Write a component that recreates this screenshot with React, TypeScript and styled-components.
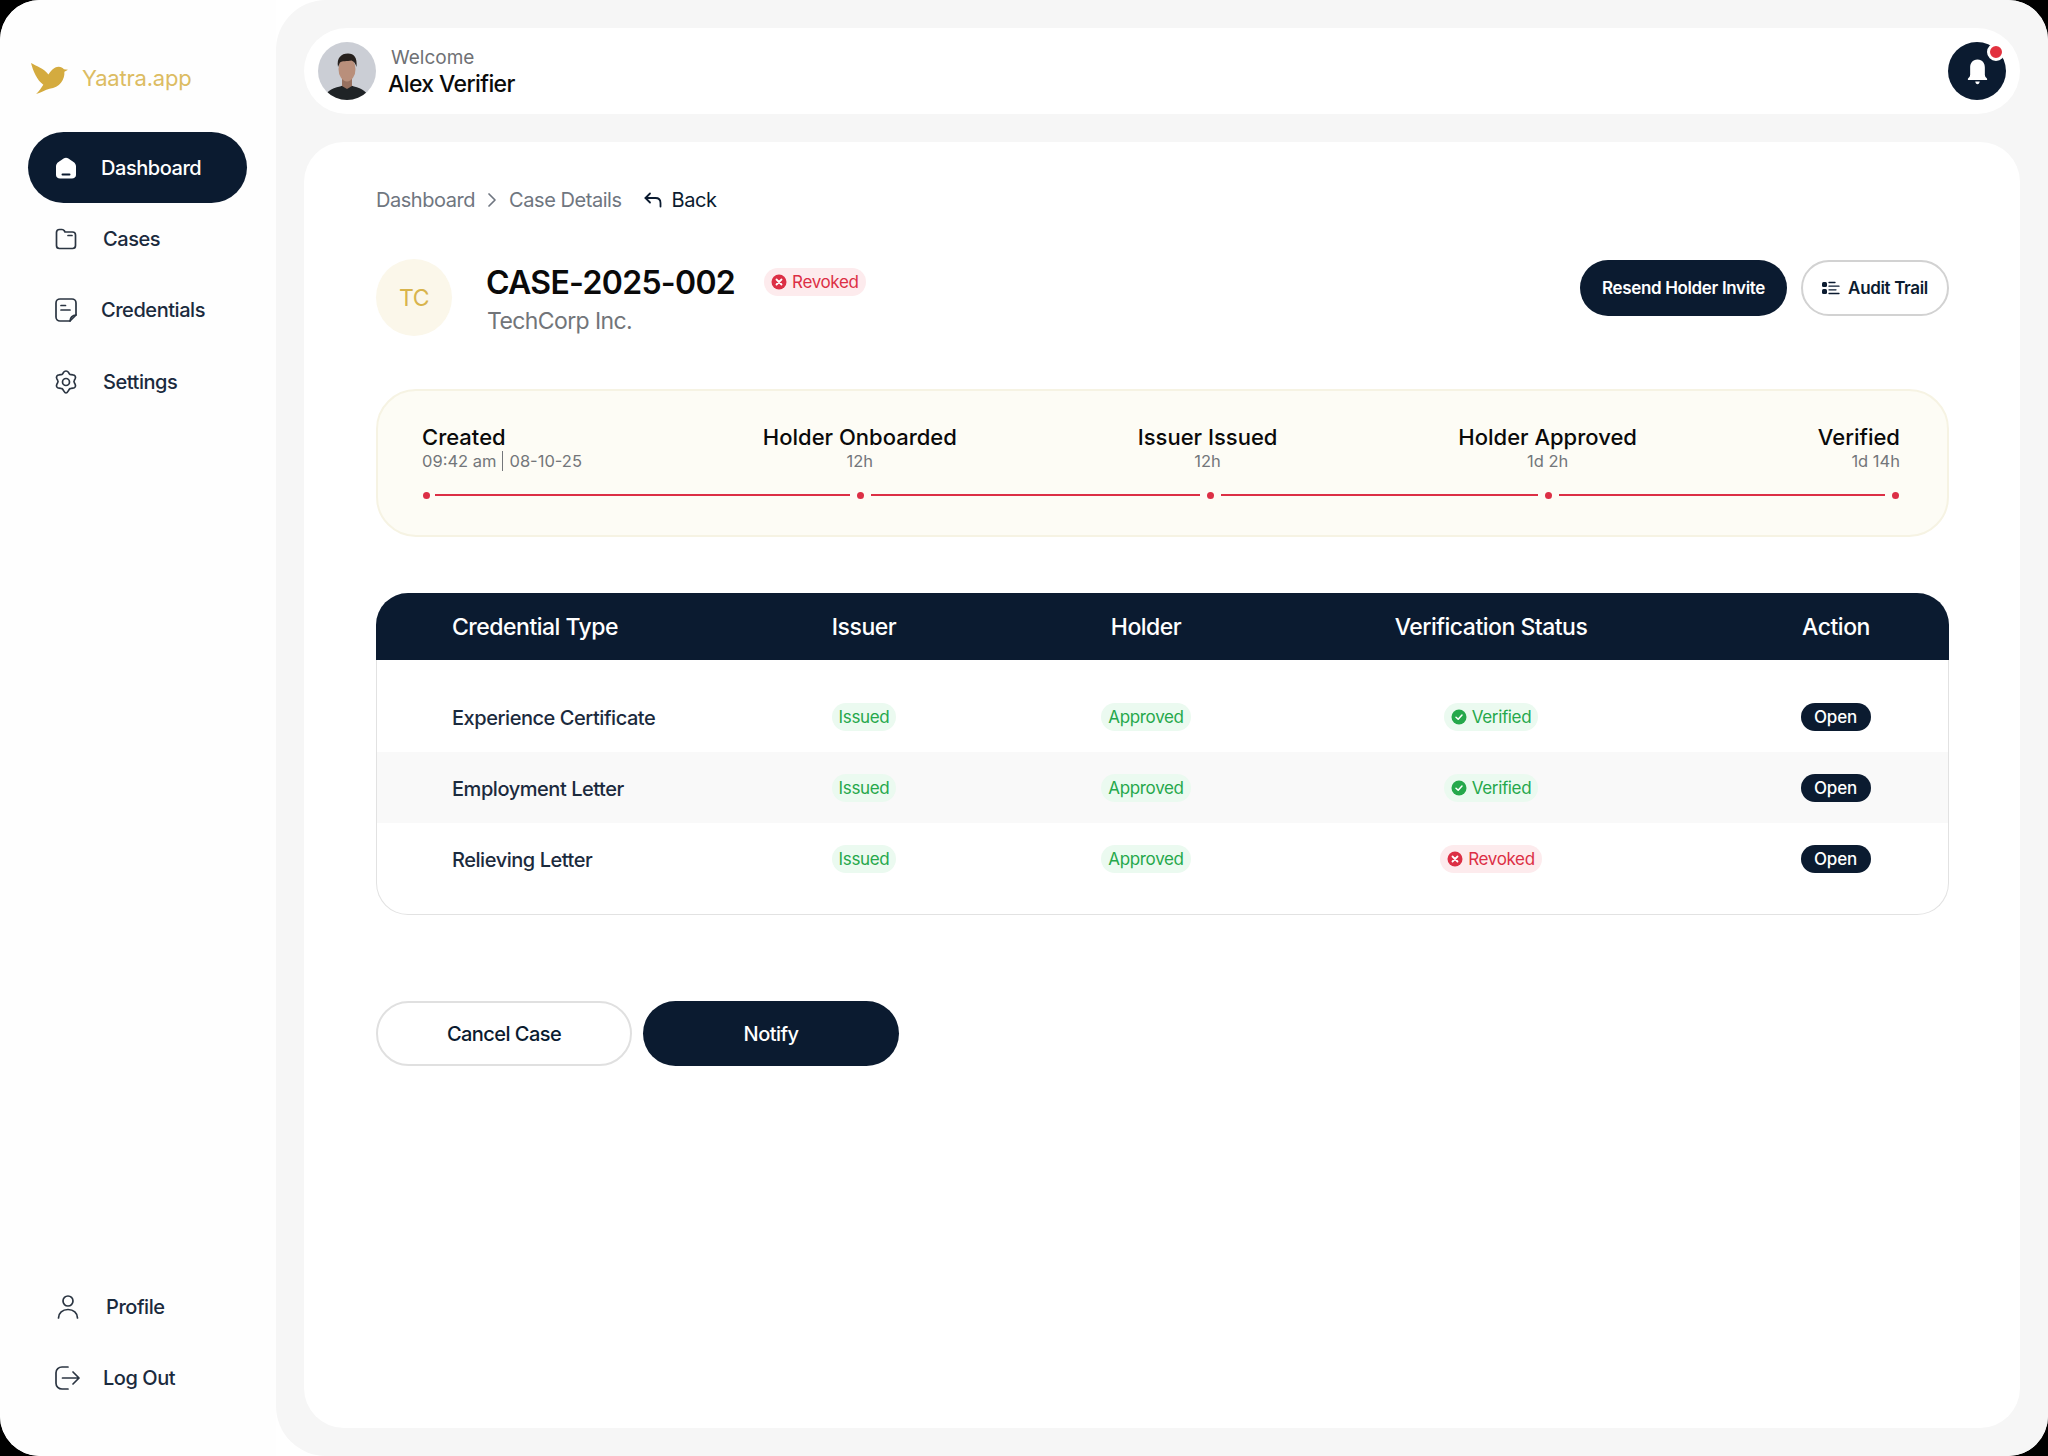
import React from 'react';
import styled, { createGlobalStyle } from 'styled-components';

const NAVY = '#0b1b30';
const RED = '#dc2f45';
const GREEN = '#25a84b';

const GlobalStyle = createGlobalStyle`
	html, body {
		margin: 0;
		padding: 0;
		background: #000000;
	}
	* {
		box-sizing: border-box;
	}
	body {
		font-family: Inter, "Liberation Sans", sans-serif;
		letter-spacing: -0.45px;
		color: ${NAVY};
	}
`;

const Frame = styled.div`
	width: 2048px;
	height: 1456px;
	display: flex;
	background: #ffffff;
	border-radius: 40px;
	overflow: hidden;
`;

const Sidebar = styled.aside`
	width: 276px;
	flex-shrink: 0;
	display: flex;
	flex-direction: column;
	padding: 61px 0 42px 28px;
	background: #fefefe;
`;

const Logo = styled.div`
	height: 34px;
	display: flex;
	align-items: center;
	gap: 14px;
	padding-left: 3px;
	font-size: 22px;
	letter-spacing: -0.2px;
	color: #dcbc62;
`;

const Nav = styled.nav`
	margin-top: 37px;
	display: flex;
	flex-direction: column;
`;

const BottomNav = styled(Nav)`
	margin-top: auto;
`;

const NavItem = styled.div<{ $active?: boolean; $gap: number; $inset?: number }>`
	width: 219px;
	height: 71.3px;
	display: flex;
	align-items: center;
	gap: ${(p) => p.$gap}px;
	padding-left: ${(p) => p.$inset ?? 27}px;
	border-radius: 36px;
	font-size: 20px;
	font-weight: 500;
	color: ${(p) => (p.$active ? '#ffffff' : '#1b2a3d')};
	background: ${(p) => (p.$active ? NAVY : 'transparent')};
`;

const Main = styled.main`
	flex: 1;
	display: flex;
	flex-direction: column;
	gap: 28px;
	padding: 28px;
	background: #f6f6f6;
	border-radius: 50px 0 0 50px;
`;

const TopBar = styled.header`
	height: 86px;
	flex-shrink: 0;
	display: flex;
	align-items: center;
	gap: 12px;
	padding: 0 14px;
	background: #ffffff;
	border-radius: 43px;
`;

const Avatar = styled.div`
	width: 58px;
	height: 58px;
	border-radius: 50%;
	overflow: hidden;
	flex-shrink: 0;

	svg {
		display: block;
		filter: blur(0.5px);
	}
`;

const Greeting = styled.div`
	flex: 1;
	display: flex;
	flex-direction: column;
`;

const Welcome = styled.span`
	margin-left: 3px;
	font-size: 19px;
	line-height: 25px;
	letter-spacing: normal;
	color: #6f7175;
`;

const UserName = styled.span`
	font-size: 23px;
	font-weight: 500;
	line-height: 28px;
	letter-spacing: -0.6px;
	color: #0a0a0a;
`;

const BellButton = styled.div`
	position: relative;
	width: 58px;
	height: 58px;
	display: flex;
	align-items: center;
	justify-content: center;
	padding-top: 2px;
	border-radius: 50%;
	background: ${NAVY};
`;

const BellDot = styled.span`
	position: absolute;
	top: 1px;
	right: 1px;
	width: 18px;
	height: 18px;
	border-radius: 50%;
	background: #e2323f;
	border: 3px solid #ffffff;
`;

const Card = styled.section`
	flex: 1;
	padding: 46px 71px 0 72px;
	background: #ffffff;
	border-radius: 40px;
`;

const Breadcrumb = styled.div`
	height: 24px;
	display: flex;
	align-items: center;
	font-size: 20px;
	color: #6f7680;
`;

const Crumb = styled.span`
	display: flex;
	margin-left: 11px;
`;

const BackLink = styled.span`
	display: flex;
	align-items: center;
	gap: 10px;
	margin-left: 22px;
	color: ${NAVY};
`;

const CaseHeader = styled.div`
	margin-top: 47px;
	height: 77px;
	display: flex;
	align-items: flex-start;
`;

const Initials = styled.div`
	width: 76px;
	height: 77px;
	display: flex;
	align-items: center;
	justify-content: center;
	border-radius: 50%;
	background: #fbf7ea;
	font-size: 23px;
	color: #d8b44c;
`;

const CaseInfo = styled.div`
	margin-left: 34px;
	flex: 1;
`;

const TitleRow = styled.div`
	height: 46px;
	display: flex;
	align-items: center;
	gap: 29px;
`;

const CaseTitle = styled.h1`
	margin: 0;
	font-size: 32px;
	font-weight: 600;
	letter-spacing: -0.7px;
	color: #0a0a0a;
`;

const CaseCompany = styled.div`
	margin: 2px 0 0 1px;
	font-size: 23px;
	line-height: 28px;
	letter-spacing: -0.6px;
	color: #727579;
`;

const Actions = styled.div`
	margin-top: 1px;
	display: flex;
	gap: 14px;
`;

const HeaderButton = styled.div<{ $outline?: boolean; $w: number }>`
	width: ${(p) => p.$w}px;
	height: 56px;
	display: flex;
	align-items: center;
	justify-content: center;
	gap: 8px;
	border-radius: 28px;
	font-size: 17px;
	font-weight: 600;
	letter-spacing: -0.35px;
	color: ${(p) => (p.$outline ? NAVY : '#ffffff')};
	background: ${(p) => (p.$outline ? '#ffffff' : NAVY)};
	border: ${(p) => (p.$outline ? '2px solid #d2d2d2' : 'none')};
`;

const Timeline = styled.div`
	margin-top: 53px;
	height: 148px;
	padding: 33px 47px 0 44px;
	background: #fdfcf5;
	border: 2px solid #f6f3e3;
	border-radius: 40px;
`;

const Steps = styled.div`
	display: flex;
	justify-content: space-between;
`;

const Step = styled.div<{ $align: string }>`
	display: flex;
	flex-direction: column;
	text-align: ${(p) => p.$align};
	letter-spacing: normal;
`;

const StepName = styled.span`
	font-size: 22px;
	font-weight: 500;
	line-height: 26px;
	color: #0a0a0a;
`;

const StepTime = styled.span`
	font-size: 16.5px;
	line-height: 22px;
	color: #73767a;
`;

const TimeDivider = styled.span`
	margin: 0 6px;
	border-left: 1.5px solid #73767a;
`;

const Track = styled.div`
	margin-top: 20px;
	padding: 0 1px;
	height: 6px;
	display: flex;
	align-items: center;
	gap: 7px;
`;

const TrackDot = styled.span`
	width: 7px;
	height: 7px;
	flex-shrink: 0;
	border-radius: 50%;
	background: ${RED};
`;

const TrackLine = styled.span<{ $w: number }>`
	flex: ${(p) => p.$w} 1 0;
	height: 1.5px;
	background: ${RED};

	&:nth-child(2) {
		margin-left: -2px;
	}
`;

const Table = styled.div`
	margin-top: 56px;
	height: 322px;
	display: flex;
	flex-direction: column;
`;

const TableHead = styled.div`
	height: 67px;
	flex-shrink: 0;
	display: grid;
	grid-template-columns: 319px 338px 226px 464px 1fr;
	align-items: center;
	background: ${NAVY};
	border-radius: 32px 32px 0 0;
	font-size: 23px;
	font-weight: 500;
	letter-spacing: -0.5px;
	color: #ffffff;
`;

const TableBody = styled.div`
	flex: 1;
	padding-top: 21px;
	border: 1.5px solid #e2e2e2;
	border-top: none;
	border-radius: 0 0 32px 32px;
`;

const Row = styled.div<{ $shaded?: boolean }>`
	height: 71px;
	display: grid;
	grid-template-columns: 318px 338px 226px 464px 1fr;
	align-items: center;
	background: ${(p) => (p.$shaded ? '#f9f9f9' : 'transparent')};
`;

const HeadFirst = styled.span`
	padding-left: 76px;
`;

const TypeCell = styled.span`
	padding: 2px 0 0 75px;
	font-size: 20px;
	font-weight: 500;
	color: #1b2a3d;
`;

const Cell = styled.span`
	display: flex;
	justify-content: center;
`;

const Badge = styled.span<{ $tone: 'green' | 'red' }>`
	height: 28px;
	display: inline-flex;
	align-items: center;
	gap: 5px;
	padding: 0 7px;
	border-radius: 14px;
	font-size: 17px;
	font-weight: 400;
	letter-spacing: -0.35px;
	color: ${(p) => (p.$tone === 'green' ? GREEN : RED)};
	background: ${(p) => (p.$tone === 'green' ? '#ebfaf0' : '#fdebed')};
`;

const OpenPill = styled.span`
	width: 70px;
	height: 28px;
	display: flex;
	align-items: center;
	justify-content: center;
	border-radius: 14px;
	background: ${NAVY};
	font-size: 17px;
	font-weight: 500;
	letter-spacing: -0.2px;
	color: #ffffff;
`;

const Footer = styled.div`
	margin-top: 86px;
	display: flex;
	gap: 11px;
`;

const FooterButton = styled.div<{ $primary?: boolean }>`
	width: 256px;
	height: 65px;
	display: flex;
	align-items: center;
	justify-content: center;
	border-radius: 33px;
	font-size: 20px;
	font-weight: 500;
	letter-spacing: -0.55px;
	color: ${(p) => (p.$primary ? '#ffffff' : NAVY)};
	background: ${(p) => (p.$primary ? NAVY : '#ffffff')};
	border: ${(p) => (p.$primary ? 'none' : '2px solid #e0e0e0')};
`;

const Bird = () => (
	<svg width="37" height="31" viewBox="0 0 36 30" fill="#d4ab3f">
		<path d="M0 0C5 3 12 5 17 11C19 8 22 3.5 27 3.5C29 3.5 31 4.500 32 6L36 6.500L32.500 8.500C33 16 28 24 18 25C14 26 10 29 5 30C8 27 10 24 12 21C6 17 2 8 0 0Z" />
	</svg>
);

const outline = {
	fill: 'none',
	stroke: '#2b3542',
	strokeWidth: 1.7,
	strokeLinecap: 'round' as const,
	strokeLinejoin: 'round' as const,
};

const HomeIcon = () => (
	<svg width="22" height="24" viewBox="0 0 22 24">
		<path d="M1 10.500C1 8.500 2 7 3.500 6L9 2.300C10.200 1.500 11.800 1.500 13 2.300L18.500 6C20 7 21 8.500 21 10.500V19C21 21.200 19.200 22.500 17 22.500H5C2.800 22.500 1 21.200 1 19Z" fill="#ffffff" />
		<path d="M7.500 18.500H14.500" stroke={NAVY} strokeWidth="2" strokeLinecap="round" />
	</svg>
);

const FolderIcon = () => (
	<svg width="22" height="22" viewBox="0 0 22 22" {...outline}>
		<path d="M1.500 4.500C1.500 2.800 2.800 1.500 4.500 1.500H7C8 1.500 8.800 2 9.300 2.800L10 4H17.500C19.200 4 20.500 5.300 20.500 7V17.500C20.500 19.200 19.200 20.500 17.500 20.500H4.500C2.800 20.500 1.500 19.200 1.500 17.500Z" />
		<path d="M13 7.500H17" />
	</svg>
);

const NoteIcon = () => (
	<svg width="22" height="24" viewBox="0 0 22 24" {...outline}>
		<path d="M21 17V5C21 2.800 19.200 1 17 1H5C2.800 1 1 2.800 1 5V19C1 21.200 2.800 23 5 23H15Z" />
		<path d="M15 23C15 20 17.500 17 21 17" />
		<path d="M6 7.500H10.500M6 12H15" />
	</svg>
);

const GearIcon = () => (
	<svg width="24" height="24" viewBox="0 0 24 24" {...outline}>
		<path d="M9.700 2.100C10.200 1.300 11.100 1 12 1C12.900 1 13.800 1.300 14.300 2.100L15.300 3.700C15.700 4.300 16.400 4.700 17.100 4.700L19 4.800C19.900 4.800 20.700 5.300 21.200 6.100C21.600 6.900 21.600 7.800 21.200 8.600L20.300 10.300C19.900 11 19.900 12 20.300 12.700L21.200 14.400C21.600 15.200 21.600 16.100 21.200 16.900C20.700 17.700 19.900 18.200 19 18.200L17.100 18.300C16.400 18.300 15.700 18.700 15.300 19.300L14.300 20.900C13.800 21.700 12.900 23 12 23C11.100 23 10.200 21.700 9.700 20.900L8.700 19.300C8.300 18.700 7.600 18.300 6.900 18.300L5 18.200C4.100 18.200 3.300 17.700 2.800 16.900C2.400 16.100 2.400 15.200 2.800 14.400L3.700 12.700C4.100 12 4.100 11 3.700 10.300L2.800 8.600C2.400 7.800 2.400 6.900 2.800 6.100C3.300 5.300 4.100 4.800 5 4.800L6.900 4.700C7.600 4.700 8.300 4.300 8.700 3.700Z" />
		<circle cx="12" cy="12" r="3.500" />
	</svg>
);

const PersonIcon = () => (
	<svg width="22" height="24" viewBox="0 0 22 24" {...outline}>
		<circle cx="11" cy="6" r="5" />
		<path d="M1.500 23C1.500 18 5.500 14.500 11 14.500C16.500 14.500 20.500 18 20.500 23" />
	</svg>
);

const LogoutIcon = () => (
	<svg width="25" height="24" viewBox="0 0 25 24" {...outline}>
		<path d="M13 1H7C3.700 1 1 3.500 1 6.800V17.200C1 20.500 3.700 23 7 23H13" />
		<path d="M7.500 12H24M18 6L24 12L18 18" />
	</svg>
);

const Chevron = () => (
	<svg width="12" height="16" viewBox="0 0 12 16" fill="none" stroke="#6f7680" strokeWidth="1.700" strokeLinecap="round" strokeLinejoin="round">
		<path d="M3 2L9 8L3 14" />
	</svg>
);

const BackArrow = () => (
	<svg width="18" height="16" viewBox="0 0 18 16" fill="none" stroke={NAVY} strokeWidth="1.800" strokeLinecap="round" strokeLinejoin="round">
		<path d="M6 1.500L1.500 6L6 10.500" />
		<path d="M1.500 6H11.500C14.500 6 16.500 8 16.500 11V14.500" />
	</svg>
);

const BellIcon = () => (
	<svg width="21" height="26" viewBox="0 0 18 23" fill="#ffffff">
		<path d="M9 0.500C4.500 0.500 2.500 4 2.500 7.500V14C2.500 15.500 1.500 16.500 0.500 17.500V18.500H17.500V17.500C16.500 16.500 15.500 15.500 15.500 14V7.500C15.500 4 13.500 0.500 9 0.500Z" />
		<path d="M7 20H11C10.800 21.500 10 22.300 9 22.300C8 22.300 7.200 21.500 7 20Z" />
	</svg>
);

const AuditIcon = () => (
	<svg width="18" height="14" viewBox="0 0 18 14">
		<rect x="0" y="1" width="5" height="5" rx="1.500" fill={NAVY} />
		<rect x="0" y="8" width="5" height="5" rx="1.500" fill={NAVY} />
		<path d="M7 1.500H13M7 5.200H17M7 8.800H14M7 12.500H17" stroke={NAVY} strokeWidth="1.300" strokeLinecap="round" />
	</svg>
);

const StatusIcon = ({ kind }: { kind: 'check' | 'cross' }) => (
	<svg width="16" height="16" viewBox="0 0 16 16">
		<circle cx="8" cy="8" r="7.500" fill={kind === 'check' ? GREEN : RED} />
		{kind === 'check' ? (
			<path d="M5 8.200L7.200 10.300L11 6" fill="none" stroke="#ffffff" strokeWidth="1.500" strokeLinecap="round" strokeLinejoin="round" />
		) : (
			<path d="M5.500 5.500L10.500 10.500M10.500 5.500L5.500 10.500" fill="none" stroke="#ffffff" strokeWidth="1.800" strokeLinecap="round" />
		)}
	</svg>
);

const Portrait = () => (
	<svg width="58" height="58" viewBox="0 0 58 58">
		<rect width="58" height="58" fill="#cbced5" />
		<path d="M6 58C7 50 13 46.500 22 44.500L29 42L36 44.500C44 46.500 50 50 52 58Z" fill="#1f2326" />
		<path d="M24 36H34V44L29 47L24 44Z" fill="#96705f" />
		<ellipse cx="29" cy="27" rx="8.500" ry="12.500" fill="#b98f7b" />
		<path d="M20 25C18.500 16 23 11.500 30 11.500C36 11.500 39.500 15.500 38.500 25C37.500 21.500 36 19.500 33.500 18.500C29 19.500 24 18.500 22 20.500Z" fill="#26201d" />
	</svg>
);

const steps = [
	{ name: 'Created', align: 'left' },
	{ name: 'Holder Onboarded', time: '12h', align: 'center' },
	{ name: 'Issuer Issued', time: '12h', align: 'center' },
	{ name: 'Holder Approved', time: '1d 2h', align: 'center' },
	{ name: 'Verified', time: '1d 14h', align: 'right' },
];

const rows = [
	{ type: 'Experience Certificate', verified: true },
	{ type: 'Employment Letter', verified: true, shaded: true },
	{ type: 'Relieving Letter', verified: false },
];

const App = () => (
	<>
		<GlobalStyle />
		<Frame>
			<Sidebar>
				<Logo>
					<Bird />
					Yaatra.app
				</Logo>
				<Nav>
					<NavItem $active $gap={24}>
						<HomeIcon />
						Dashboard
					</NavItem>
					<NavItem $gap={26}>
						<FolderIcon />
						Cases
					</NavItem>
					<NavItem $gap={24}>
						<NoteIcon />
						Credentials
					</NavItem>
					<NavItem $gap={25} $inset={26}>
						<GearIcon />
						Settings
					</NavItem>
				</Nav>
				<BottomNav>
					<NavItem $gap={27} $inset={29}>
						<PersonIcon />
						Profile
					</NavItem>
					<NavItem $gap={23} $inset={27}>
						<LogoutIcon />
						Log Out
					</NavItem>
				</BottomNav>
			</Sidebar>
			<Main>
				<TopBar>
					<Avatar>
						<Portrait />
					</Avatar>
					<Greeting>
						<Welcome>Welcome</Welcome>
						<UserName>Alex Verifier</UserName>
					</Greeting>
					<BellButton>
						<BellIcon />
						<BellDot />
					</BellButton>
				</TopBar>
				<Card>
					<Breadcrumb>
						<span>Dashboard</span>
						<Crumb>
							<Chevron />
						</Crumb>
						<Crumb>Case Details</Crumb>
						<BackLink>
							<BackArrow />
							Back
						</BackLink>
					</Breadcrumb>
					<CaseHeader>
						<Initials>TC</Initials>
						<CaseInfo>
							<TitleRow>
								<CaseTitle>CASE-2025-002</CaseTitle>
								<Badge $tone="red">
									<StatusIcon kind="cross" />
									Revoked
								</Badge>
							</TitleRow>
							<CaseCompany>TechCorp Inc.</CaseCompany>
						</CaseInfo>
						<Actions>
							<HeaderButton $w={207}>Resend Holder Invite</HeaderButton>
							<HeaderButton $outline $w={148}>
								<AuditIcon />
								Audit Trail
							</HeaderButton>
						</Actions>
					</CaseHeader>
					<Timeline>
						<Steps>
							{steps.map((s) => (
								<Step key={s.name} $align={s.align}>
									<StepName>{s.name}</StepName>
									<StepTime>
										{s.time ?? (
											<>
												09:42 am
												<TimeDivider />
												08-10-25
											</>
										)}
									</StepTime>
								</Step>
							))}
						</Steps>
						<Track>
							<TrackDot />
							<TrackLine $w={415} />
							<TrackDot />
							<TrackLine $w={329} />
							<TrackDot />
							<TrackLine $w={317} />
							<TrackDot />
							<TrackLine $w={326} />
							<TrackDot />
						</Track>
					</Timeline>
					<Table>
						<TableHead>
							<HeadFirst>Credential Type</HeadFirst>
							<Cell>Issuer</Cell>
							<Cell>Holder</Cell>
							<Cell>Verification Status</Cell>
							<Cell>Action</Cell>
						</TableHead>
						<TableBody>
							{rows.map((r) => (
								<Row key={r.type} $shaded={r.shaded}>
									<TypeCell>{r.type}</TypeCell>
									<Cell>
										<Badge $tone="green">Issued</Badge>
									</Cell>
									<Cell>
										<Badge $tone="green">Approved</Badge>
									</Cell>
									<Cell>
										{r.verified ? (
											<Badge $tone="green">
												<StatusIcon kind="check" />
												Verified
											</Badge>
										) : (
											<Badge $tone="red">
												<StatusIcon kind="cross" />
												Revoked
											</Badge>
										)}
									</Cell>
									<Cell>
										<OpenPill>Open</OpenPill>
									</Cell>
								</Row>
							))}
						</TableBody>
					</Table>
					<Footer>
						<FooterButton>Cancel Case</FooterButton>
						<FooterButton $primary>Notify</FooterButton>
					</Footer>
				</Card>
			</Main>
		</Frame>
	</>
);

export default App;
